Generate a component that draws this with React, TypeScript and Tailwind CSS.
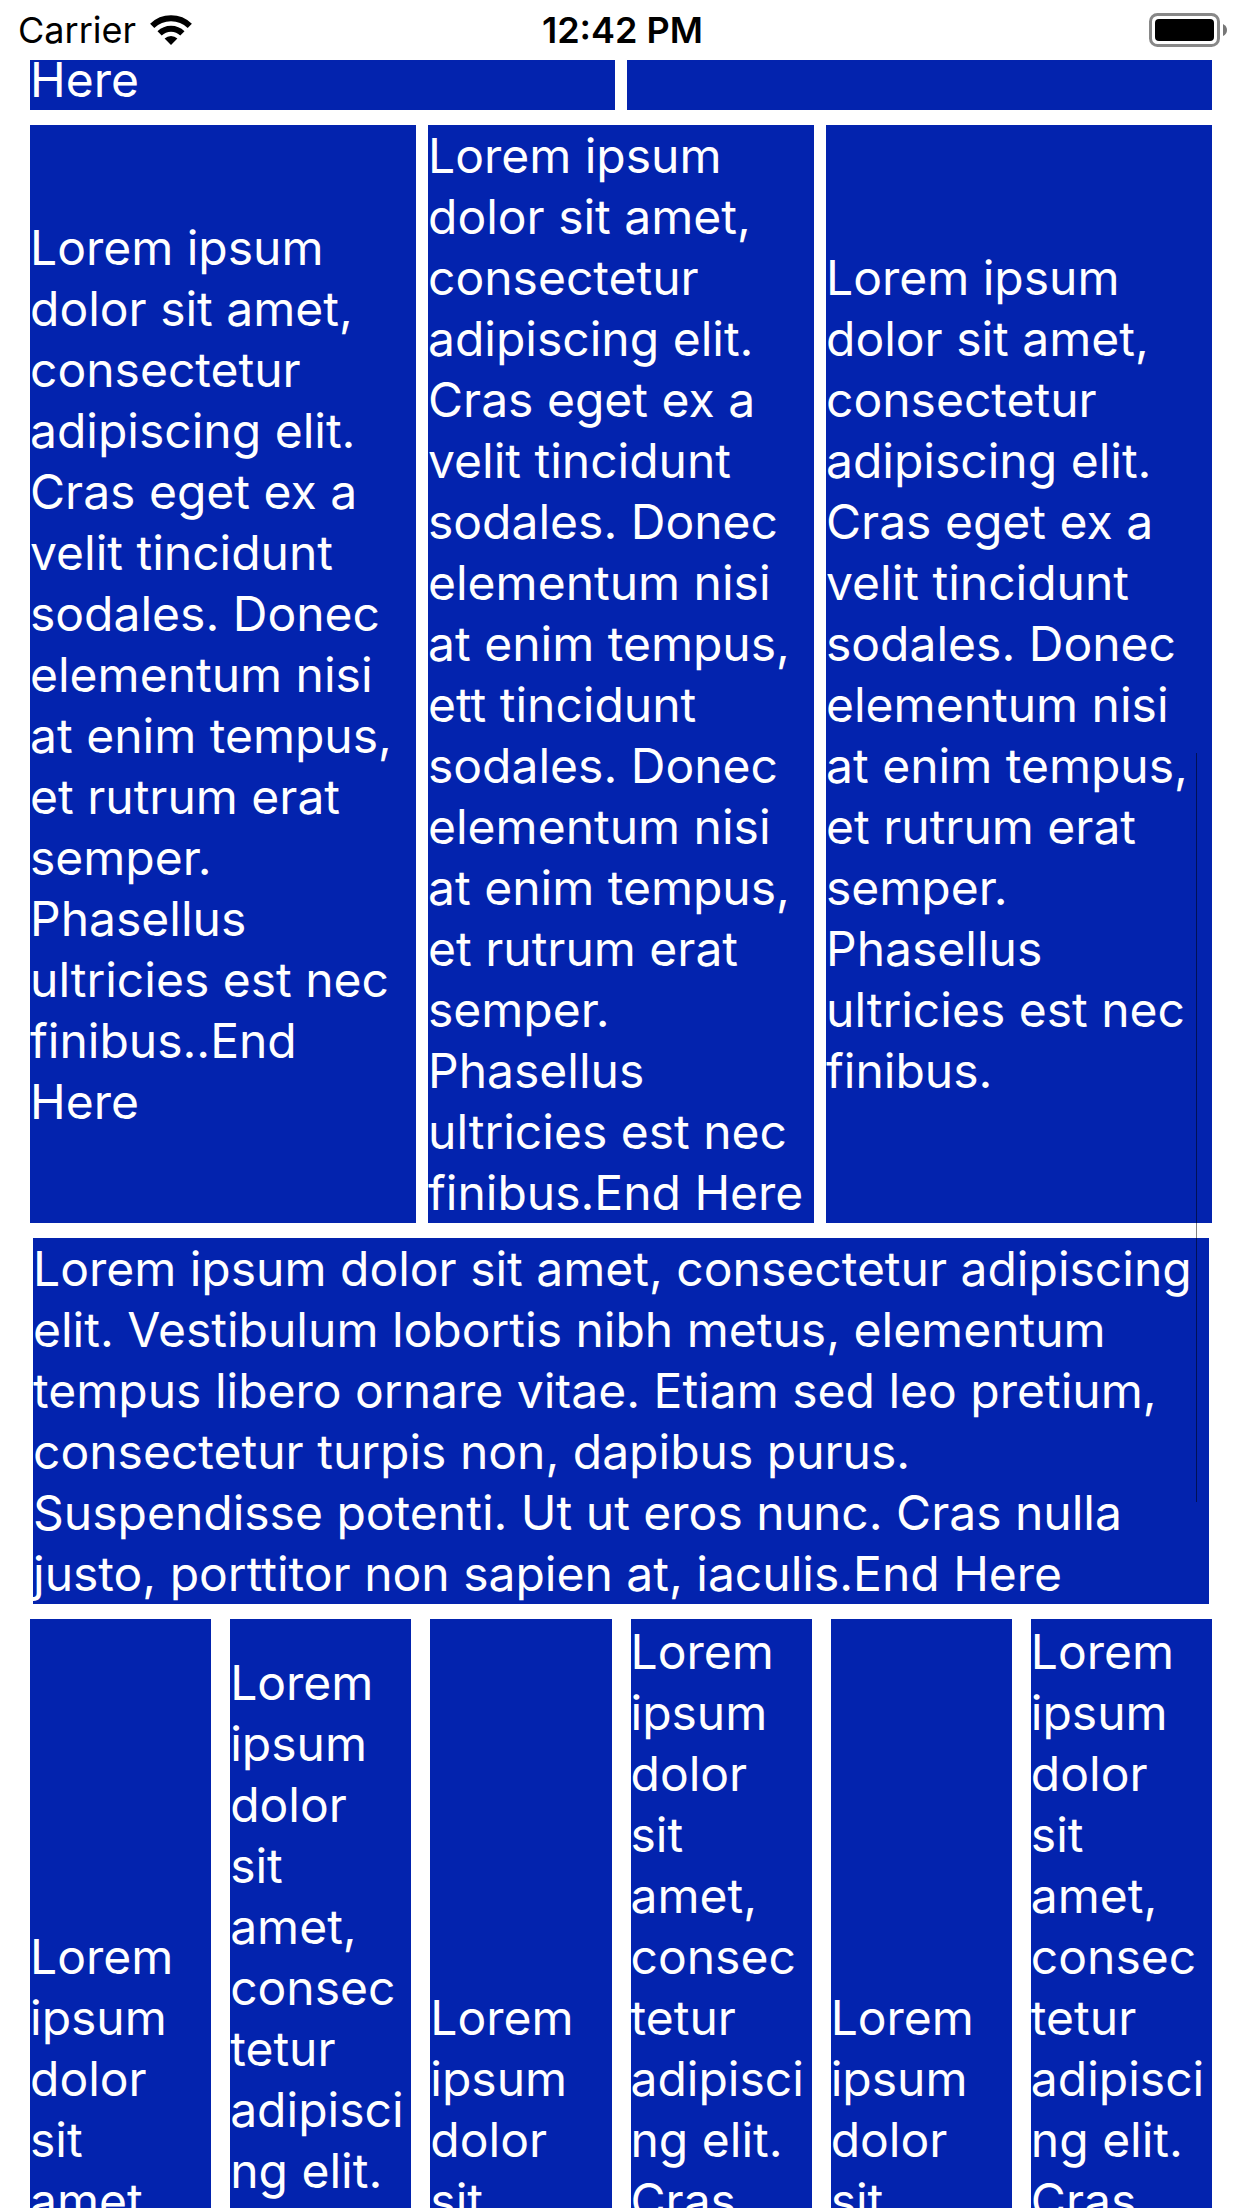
import React from "react";

const halves = ["Here", ""];

const thirds = [
  "Lorem ipsum\ndolor sit amet,\nconsectetur\nadipiscing elit.\nCras eget ex a\nvelit tincidunt\nsodales. Donec\nelementum nisi\nat enim tempus,\net rutrum erat\nsemper.\nPhasellus\nultricies est nec\nfinibus..End\nHere",
  "Lorem ipsum\ndolor sit amet,\nconsectetur\nadipiscing elit.\nCras eget ex a\nvelit tincidunt\nsodales. Donec\nelementum nisi\nat enim tempus,\nett tincidunt\nsodales. Donec\nelementum nisi\nat enim tempus,\net rutrum erat\nsemper.\nPhasellus\nultricies est nec\nfinibus.End Here",
  "Lorem ipsum\ndolor sit amet,\nconsectetur\nadipiscing elit.\nCras eget ex a\nvelit tincidunt\nsodales. Donec\nelementum nisi\nat enim tempus,\net rutrum erat\nsemper.\nPhasellus\nultricies est nec\nfinibus.",
];

const full =
  "Lorem ipsum dolor sit amet, consectetur adipiscing\nelit. Vestibulum lobortis nibh metus, elementum\ntempus libero ornare vitae. Etiam sed leo pretium,\nconsectetur turpis non, dapibus purus.\nSuspendisse potenti. Ut ut eros nunc. Cras nulla\njusto, porttitor non sapien at, iaculis.End Here";

const sixths = [
  { lead: "pt-[307px]", text: "Lorem\nipsum\ndolor\nsit\namet," },
  { lead: "pt-[33px]", text: "Lorem\nipsum\ndolor\nsit\namet,\nconsec\ntetur\nadipisci\nng elit." },
  { lead: "pt-[368px]", text: "Lorem\nipsum\ndolor\nsit" },
  { lead: "pt-[2px]", text: "Lorem\nipsum\ndolor\nsit\namet,\nconsec\ntetur\nadipisci\nng elit.\nCras" },
  { lead: "pt-[368px]", text: "Lorem\nipsum\ndolor\nsit" },
  { lead: "pt-[2px]", text: "Lorem\nipsum\ndolor\nsit\namet,\nconsec\ntetur\nadipisci\nng elit.\nCras" },
];

function WifiIcon() {
  return (
    <svg className="h-[30px] w-[42px]" viewBox="0 0 42 30" aria-label="Wi-Fi">
      <g fill="none" stroke="#000" strokeWidth="6">
        <path d="M2.2 10.8A27 27 0 0 1 39.8 10.8" />
        <path d="M9.6 18.4A16.3 16.3 0 0 1 32.4 18.4" />
      </g>
      <path d="M21 30L14.6 23.6A9.2 9.2 0 0 1 27.4 23.6Z" />
    </svg>
  );
}

function BatteryIcon() {
  return (
    <svg className="h-[34px] w-[78px]" viewBox="0 0 78 34" aria-label="Battery full">
      <rect x="1.5" y="1.5" width="68" height="31" rx="7" fill="none" stroke="#888" strokeWidth="3" />
      <rect x="6" y="6" width="59" height="22" rx="4" />
      <path d="M74 11Q78 13 78 17T74 23Z" fill="#777" />
    </svg>
  );
}

export default function App() {
  return (
    <div className="relative flex h-screen flex-col overflow-hidden bg-white font-['Inter',sans-serif] text-[48px] leading-[61px] text-white">
      <header className="grid h-[60px] shrink-0 grid-cols-3 items-center pr-[15px] pl-[18px] text-[36px] leading-[60px] text-black">
        <div className="flex items-center gap-[14px]">
          <span>Carrier</span>
          <WifiIcon />
        </div>
        <time className="text-center font-semibold">12:42 PM</time>
        <div className="flex justify-end">
          <BatteryIcon />
        </div>
      </header>
      <main className="flex min-h-0 flex-1 flex-col gap-[15px] px-[30px]">
        <section className="grid h-[50px] shrink-0 grid-cols-2 gap-[12px] overflow-hidden">
          {halves.map((text, i) => (
            <div key={i} className="flex items-end overflow-hidden bg-[#0323AE]">
              <p>{text}</p>
            </div>
          ))}
        </section>
        <section className="grid shrink-0 grid-cols-3 gap-[12px]">
          {thirds.map((text, i) => (
            <div key={i} className="flex min-w-0 items-center bg-[#0323AE]">
              <p className="whitespace-pre">{text}</p>
            </div>
          ))}
        </section>
        <section className="mx-[3px] shrink-0 bg-[#0323AE]">
          <p className="whitespace-pre">{full}</p>
        </section>
        <section className="grid min-h-0 flex-1 grid-cols-6 gap-[19px] overflow-hidden">
          {sixths.map(({ lead, text }, i) => (
            <div key={i} className={`min-w-0 bg-[#0323AE] ${lead}`}>
              <p className="whitespace-pre">{text}</p>
            </div>
          ))}
        </section>
      </main>
      <div className="absolute top-[753px] right-[45px] h-[749px] w-px bg-black/50" />
    </div>
  );
}
